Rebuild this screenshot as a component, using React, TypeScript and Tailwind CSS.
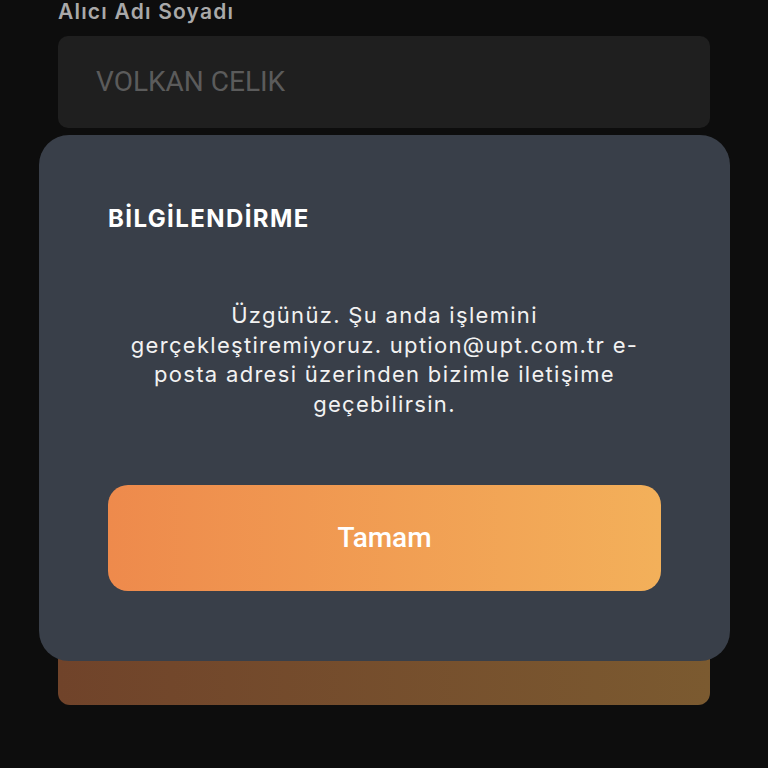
const App = () => {
  return (
    <div className="relative h-[768px] w-[768px] overflow-hidden bg-[#0d0d0d]">
      {/* page behind the dialog */}
      <div className="flex h-full flex-col px-[58px]">
        <p className="font-['Inter',sans-serif] text-[21px] leading-6 font-semibold tracking-[1.2px] text-[#a9a9a9]">
          Alıcı Adı Soyadı
        </p>
        <div className="mt-3 flex h-[92px] items-center rounded-[10px] bg-[#1f1f1f] px-[38px]">
          <span className="font-['Roboto',sans-serif] text-[28px] text-[#5b5b5b]">
            VOLKAN CELIK
          </span>
        </div>
        <div className="mt-auto mb-[63px] h-[110px] rounded-[12px] bg-gradient-to-r from-[#70432a] to-[#7b5a30]" />
      </div>

      {/* dialog */}
      <div className="absolute top-[135px] left-[39px] flex w-[691px] flex-col rounded-[30px] bg-[#393f49] px-[69px] pt-[70px] pb-[70px]">
        <h2 className="font-['Inter',sans-serif] text-[24px] leading-7 font-bold tracking-[1.4px] text-white">
          BİLGİLENDİRME
        </h2>
        <p className="mt-[68px] px-3 text-center font-['Inter',sans-serif] text-[22px] leading-[29.5px] tracking-[1.3px] text-[#f2f2f2]">
          Üzgünüz. Şu anda işlemini gerçekleştiremiyoruz. uption@upt.com.tr e-posta adresi üzerinden bizimle iletişime geçebilirsin.
        </p>
        <button className="mt-[66px] flex h-[106px] items-center justify-center rounded-[20px] bg-gradient-to-r from-[#ee8a4c] to-[#f3b05a]">
          <span className="font-['Roboto',sans-serif] text-[28px] font-medium text-white">
            Tamam
          </span>
        </button>
      </div>
    </div>
  );
};

export default App;
